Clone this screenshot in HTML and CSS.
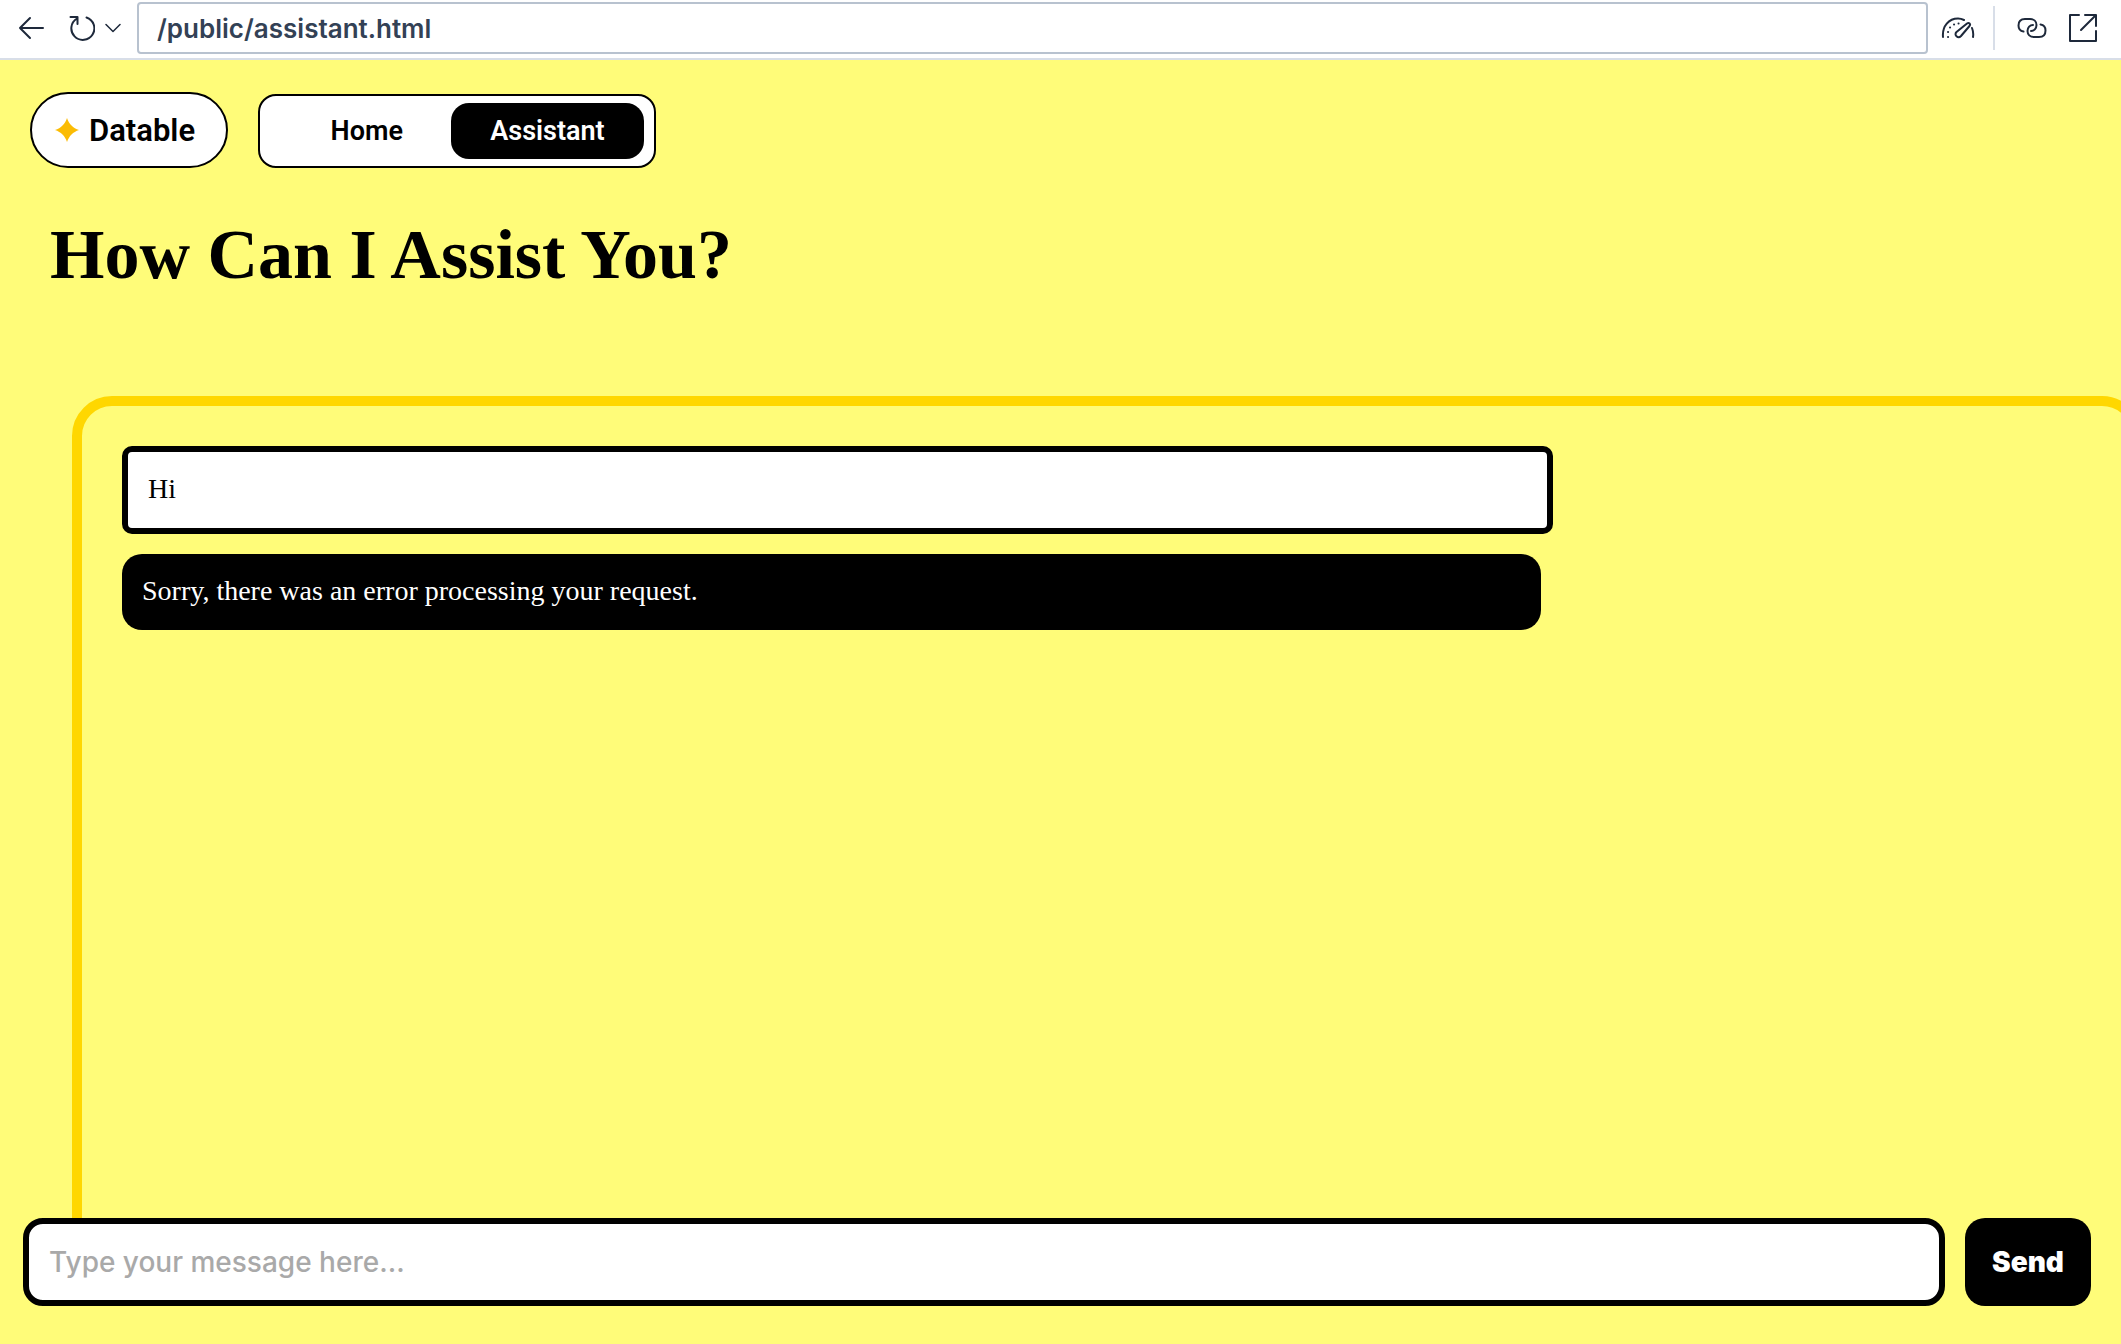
FILE: index.html
```html
<!DOCTYPE html>
<html lang="en">
<head>
<meta charset="utf-8">
<title>Datable Assistant</title>
<link rel="stylesheet" href="styles.css">
</head>
<body>
<div class="toolbar">
  <button class="tool back" type="button" aria-label="Back">
    <svg width="26" height="24" viewBox="0 0 26 24"><path d="M25 12H2M12 2 2 12l10 10"/></svg>
  </button>
  <button class="tool reload" type="button" aria-label="Reload">
    <svg width="26" height="26" viewBox="0 0 26 26"><path d="M8 3.500A11.500 11.500 0 1 0 17.500 2.500M1.500 2H8.500V9"/></svg>
  </button>
  <button class="tool more" type="button" aria-label="Reload options">
    <svg width="16" height="10" viewBox="0 0 16 10"><path class="thin" d="M1 1.500 8 8.500 15 1.500"/></svg>
  </button>
  <input class="address" type="text" aria-label="Address" value="/public/assistant.html">
  <button class="tool gauge" type="button" aria-label="Performance">
    <svg width="34" height="22" viewBox="0 0 34 22"><path d="M2 20C1 9 8 1.500 17 1.500c2 0 4 .5 6 1.500M31 11c1.200 3 1.500 6 1 9M15.500 15 26 6.500c2-1.500 4 .5 2.500 2.500L20 19c-3 3-7.500-1-4.500-4Z"/><path class="dots" d="M7 20h.1M7 15h.1M9 10.500h.1M13 7.500h.1M17.500 6.500h.1"/></svg>
  </button>
  <span class="divider"></span>
  <button class="tool link" type="button" aria-label="Copy link">
    <svg width="30" height="22" viewBox="0 0 30 22"><path d="M6.500 14.500C3.500 14 1.500 11.500 1.500 8.500 1.500 4.500 4 2 8 2h5c4 0 6.500 2.500 6.500 6 0 3.500-2.500 6-5.500 6M23.500 7.500c3 .5 5 3 5 6 0 4-2.500 6.500-6.500 6.500h-5c-4 0-6.500-2.500-6.500-6 0-3.500 2.500-6 5.500-6"/></svg>
  </button>
  <button class="tool open" type="button" aria-label="Open in new tab">
    <svg width="30" height="30" viewBox="0 0 30 30"><path d="M11 2H2v26h26V18M17 2h11v11M28 2 13 17"/></svg>
  </button>
</div>

<header class="site-header">
  <a class="brand" href="#">
    <svg width="24" height="24" viewBox="0 0 24 24"><path d="M12 0C14 6 18 10 24 12 18 14 14 18 12 24 10 18 6 14 0 12 6 10 10 6 12 0Z"/></svg>
    Datable
  </a>
  <nav class="nav">
    <a class="nav-link" href="#">Home</a>
    <a class="nav-link active" href="#" aria-current="page">Assistant</a>
  </nav>
</header>

<h1 class="title">How Can I Assist You?</h1>

<main class="chat-area">
  <div class="chat">
    <p class="message user">Hi</p>
    <p class="message bot">Sorry, there was an error processing your request.</p>
  </div>
</main>

<form class="composer">
  <input class="prompt" type="text" placeholder="Type your message here..." aria-label="Message">
  <button class="send" type="button">Send</button>
</form>
</body>
</html>
```
FILE: styles.css
```css
* {
  box-sizing: border-box;
}

body {
  margin: 0;
  height: 100vh;
  display: flex;
  flex-direction: column;
  overflow: hidden;
  background: #fffc79;
  color: #000;
  font-family: "Liberation Serif", serif;
}

.toolbar {
  display: flex;
  align-items: center;
  height: 60px;
  padding: 0 23px 2px 18px;
  background: #fff;
  border-bottom: 2px solid #d8dee8;
}

.tool {
  display: flex;
  padding: 0;
  border: 0;
  background: none;
}

.tool path {
  fill: none;
  stroke: #1e293b;
  stroke-width: 2;
  stroke-linecap: round;
  stroke-linejoin: round;
}

.tool .thin {
  stroke-width: 1.5;
}

.reload {
  margin-left: 25px;
}

.more {
  margin: 0 16px 0 10px;
}

.address {
  flex: 1;
  min-width: 0;
  height: 52px;
  padding: 0 18px;
  border: 2px solid #b8c2cf;
  border-radius: 4px;
  background: #fff;
  color: #334155;
  font: 600 26px/32px Inter, sans-serif;
}

.gauge {
  margin-left: 13px;
}

.divider {
  width: 2px;
  height: 44px;
  margin: 0 22px 0 18px;
  background: #d8dee8;
}

.open {
  margin-left: 21px;
}

.site-header {
  display: flex;
  align-items: flex-end;
  gap: 30px;
  padding: 32px 30px 0;
  font-family: Roboto, sans-serif;
  font-weight: 600;
}

.brand {
  display: flex;
  align-items: center;
  gap: 10px;
  width: 198px;
  height: 76px;
  padding-left: 23px;
  border: 2px solid #000;
  border-radius: 38px;
  background: #fff;
  color: #000;
  font-size: 31px;
  text-decoration: none;
}

.brand path {
  fill: #fbbc04;
}

.nav {
  display: flex;
  align-items: center;
  justify-content: flex-end;
  width: 398px;
  height: 74px;
  padding: 0 10px 0 40px;
  border: 2px solid #000;
  border-radius: 18px;
  background: #fff;
}

.nav-link {
  padding: 0 48px 0 28px;
  border-radius: 18px;
  color: #000;
  font-size: 27px;
  line-height: 56px;
  text-decoration: none;
}

.active {
  width: 193px;
  padding: 0;
  background: #000;
  color: #fff;
  text-align: center;
}

.title {
  margin: 47px 50px 0;
  font-size: 70px;
  line-height: 80px;
}

.chat-area {
  flex: 1;
  min-height: 0;
  margin-top: 101px;
  overflow: hidden;
}

.chat {
  height: calc(100% + 60px);
  margin: 0 -21px 0 72px;
  padding: 40px;
  border: 10px solid #ffd700;
  border-radius: 40px;
}

.message {
  box-sizing: content-box;
  width: 70%;
  margin: 0 0 20px;
  padding: 19px 20px 21px;
  font-size: 28px;
  line-height: 36px;
}

.user {
  border: 6px solid #000;
  border-radius: 10px;
  background: #fff;
}

.bot {
  border-radius: 20px;
  background: #000;
  color: #fff;
}

.composer {
  display: flex;
  gap: 20px;
  padding: 0 30px 38px 23px;
}

.prompt,
.send {
  height: 88px;
  border-radius: 20px;
  font: 500 28px/36px Inter, sans-serif;
}

.prompt {
  flex: 1;
  min-width: 0;
  padding: 0 20px;
  border: 6px solid #000;
  background: #fff;
}

.prompt::placeholder {
  color: #a9a9a9;
}

.send {
  width: 126px;
  padding: 0;
  border: 0;
  background: #000;
  color: #fff;
  font-weight: 900;
}
```
